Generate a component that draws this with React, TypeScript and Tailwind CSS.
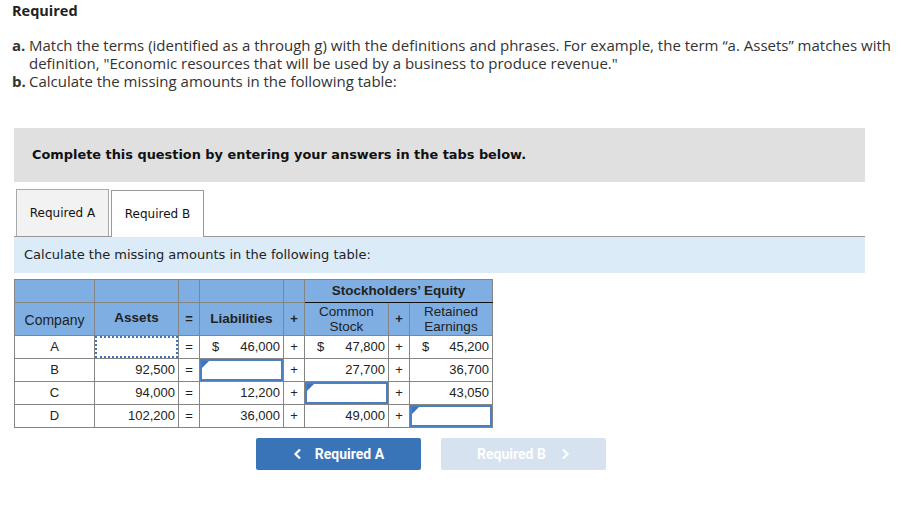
import React from "react";

const border = "border border-[#858585]";
const hdr = `${border} bg-[#7eaee2] p-0`;

function InputBox({ w }: { w?: string }) {
  return (
    <div className={`relative h-[22px] border-2 border-[#4a7fc1] bg-white ${w ?? ""}`}>
      <span className="absolute left-0 top-0 h-0 w-0 border-l-[7px] border-b-[7px] border-l-[#3f74b8] border-b-transparent" style={{ borderTopWidth: 0 }} />
    </div>
  );
}

function Money({ dollar, v }: { dollar?: boolean; v: string }) {
  return (
    <div className="flex items-center justify-between pl-[12px] pr-[3px]">
      <span>{dollar ? "$" : ""}</span>
      <span>{v}</span>
    </div>
  );
}

export default function App() {
  const td = `${border} p-0 h-[23px] text-[13px] text-[#222]`;
  const op = `${border} p-0 text-center text-[13px] text-[#222] w-[21px]`;
  return (
    <div className="w-[924px] h-[515px] bg-white relative overflow-hidden">
      <div className="pl-[12px] pt-[2px] font-['Open_Sans',sans-serif] text-[#222]">
        <div className="text-[14.5px] font-bold leading-[18px] text-[#222]">Required</div>
        <div className="mt-[16px] text-[15px] leading-[18px] text-[#333]">
          <div className="flex">
            <span className="w-[17px] shrink-0 font-bold">a.</span>
            <span>
              Match the terms (identified as a through g) with the definitions and phrases. For example, the term “a. Assets” matches with definition, "Economic resources that will be used by a business to produce revenue."
            </span>
          </div>
          <div className="flex">
            <span className="w-[17px] shrink-0 font-bold">b.</span>
            <span>Calculate the missing amounts in the following table:</span>
          </div>
        </div>
      </div>

      <div className="ml-[14px] mt-[38px] w-[851px] font-['DejaVu_Sans',sans-serif]">
        <div className="h-[54px] bg-[#e0e0e0] flex items-center pl-[18px] text-[12.9px] font-bold text-[#111]">
          Complete this question by entering your answers in the tabs below.
        </div>
        <div className="mt-[7px] flex items-end gap-[2px] pl-[2px] border-b border-[#999]">
          <div className="h-[47px] w-[93px] border border-b-0 border-[#aaa] bg-[#f2f2f2] flex items-center justify-center text-[12px] text-[#111]">
            Required A
          </div>
          <div className="h-[47px] w-[93px] border border-b-0 border-[#999] bg-white flex items-center justify-center text-[12px] text-[#111] -mb-px">
            Required B
          </div>
        </div>
        <div className="h-[36px] bg-[#dbebf8] flex items-center pl-[10px] text-[13px] text-[#222]">
          Calculate the missing amounts in the following table:
        </div>
      </div>

      <div className="ml-[14px] mt-[6px] font-['Liberation_Sans',Arial,sans-serif]">
        <table className="border-collapse table-fixed w-[478px]">
          <colgroup>
            <col className="w-[80px]" />
            <col className="w-[84px]" />
            <col className="w-[21px]" />
            <col className="w-[84px]" />
            <col className="w-[21px]" />
            <col className="w-[84px]" />
            <col className="w-[21px]" />
            <col className="w-[83px]" />
          </colgroup>
          <thead>
            <tr className="h-[23px]">
              <th className={hdr}></th>
              <th className={hdr}></th>
              <th className={hdr}></th>
              <th className={hdr}></th>
              <th className={hdr}></th>
              <th colSpan={3} className={`${hdr} border-b-[#111] text-[13.5px] font-bold text-[#222]`}>
                Stockholders’ Equity
              </th>
            </tr>
            <tr className="h-[33px]">
              <th className={`${hdr} text-[14px] font-normal text-[#222] pt-[2px]`}>Company</th>
              <th className={`${hdr} text-[13.5px] font-bold text-[#222] align-middle pb-[2px]`}>Assets</th>
              <th className={`${hdr} text-[13px] font-bold text-[#222]`}>=</th>
              <th className={`${hdr} text-[13.5px] font-bold text-[#222]`}>Liabilities</th>
              <th className={`${hdr} text-[13px] font-bold text-[#222]`}>+</th>
              <th className={`${hdr} border-t-[#111] text-[13.5px] font-normal text-[#222] leading-[15px]`}>
                Common
                <br />
                Stock
              </th>
              <th className={`${hdr} border-t-[#111] text-[13px] font-bold text-[#222]`}>+</th>
              <th className={`${hdr} border-t-[#111] text-[13.5px] font-normal text-[#222] leading-[15px]`}>
                Retained
                <br />
                Earnings
              </th>
            </tr>
          </thead>
          <tbody>
            <tr>
              <td className={`${td} text-center`}>A</td>
              <td className={`${td}`}>
                <div className="h-[22px] border-2 border-dotted border-[#3f74b8]" />
              </td>
              <td className={op}>=</td>
              <td className={td}><Money dollar v="46,000" /></td>
              <td className={op}>+</td>
              <td className={td}><Money dollar v="47,800" /></td>
              <td className={op}>+</td>
              <td className={td}><Money dollar v="45,200" /></td>
            </tr>
            <tr>
              <td className={`${td} text-center`}>B</td>
              <td className={td}><Money v="92,500" /></td>
              <td className={op}>=</td>
              <td className={td}><InputBox /></td>
              <td className={op}>+</td>
              <td className={td}><Money v="27,700" /></td>
              <td className={op}>+</td>
              <td className={td}><Money v="36,700" /></td>
            </tr>
            <tr>
              <td className={`${td} text-center`}>C</td>
              <td className={td}><Money v="94,000" /></td>
              <td className={op}>=</td>
              <td className={td}><Money v="12,200" /></td>
              <td className={op}>+</td>
              <td className={td}><InputBox /></td>
              <td className={op}>+</td>
              <td className={td}><Money v="43,050" /></td>
            </tr>
            <tr>
              <td className={`${td} text-center`}>D</td>
              <td className={td}><Money v="102,200" /></td>
              <td className={op}>=</td>
              <td className={td}><Money v="36,000" /></td>
              <td className={op}>+</td>
              <td className={td}><Money v="49,000" /></td>
              <td className={op}>+</td>
              <td className={td}><InputBox /></td>
            </tr>
          </tbody>
        </table>
      </div>

      <div className="ml-[256px] mt-[10px] flex gap-[20px] font-['Roboto',sans-serif]">
        <div className="h-[32px] w-[165px] rounded-[2px] bg-[#3a74b8] flex items-center justify-center gap-[12px] text-[14px] font-bold text-white">
          <svg width="10" height="12" viewBox="0 0 10 12"><path d="M7 1.5 L2.5 6 L7 10.5" stroke="white" strokeWidth="2.2" fill="none" /></svg>
          <span>Required A</span>
        </div>
        <div className="h-[32px] w-[165px] rounded-[2px] bg-[#d6e2f0] flex items-center justify-center gap-[14px] text-[14px] font-bold text-white">
          <span>Required B</span>
          <svg width="10" height="12" viewBox="0 0 10 12"><path d="M3 1.5 L7.5 6 L3 10.5" stroke="white" strokeWidth="2.2" fill="none" /></svg>
        </div>
      </div>
    </div>
  );
}
